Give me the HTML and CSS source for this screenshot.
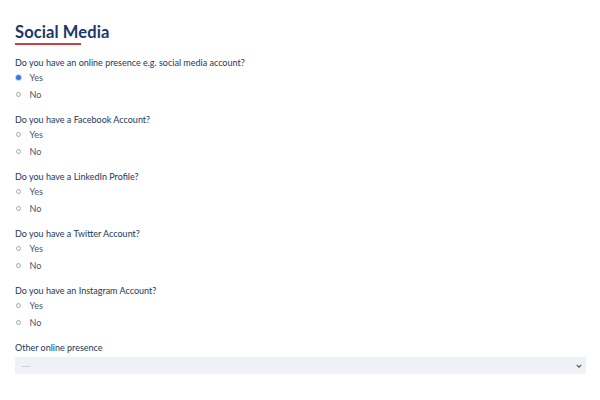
FILE: index.html
```html
<!DOCTYPE html>
<html>
<head>
<meta charset="utf-8">
<link rel="stylesheet" href="styles.css">
</head>
<body>
<div class="page">
  <h1 class="title">Social Media</h1>
  <div class="group">
    <div class="q">Do you have an online presence e.g. social media account?</div>
    <label class="opt"><span class="radio checked"></span>Yes</label>
    <label class="opt"><span class="radio"></span>No</label>
  </div>
  <div class="group">
    <div class="q">Do you have a Facebook Account?</div>
    <label class="opt"><span class="radio"></span>Yes</label>
    <label class="opt"><span class="radio"></span>No</label>
  </div>
  <div class="group">
    <div class="q">Do you have a LinkedIn Profile?</div>
    <label class="opt"><span class="radio"></span>Yes</label>
    <label class="opt"><span class="radio"></span>No</label>
  </div>
  <div class="group">
    <div class="q">Do you have a Twitter Account?</div>
    <label class="opt"><span class="radio"></span>Yes</label>
    <label class="opt"><span class="radio"></span>No</label>
  </div>
  <div class="group">
    <div class="q">Do you have an Instagram Account?</div>
    <label class="opt"><span class="radio"></span>Yes</label>
    <label class="opt"><span class="radio"></span>No</label>
  </div>
  <div class="other">
    <div class="q">Other online presence</div>
    <div class="select">
      <span class="placeholder">---</span>
      <svg class="chev" width="6" height="4" viewBox="0 0 6 4"><path d="M0.7 0.8 L3 3.1 L5.3 0.8" fill="none" stroke="#555" stroke-width="1.1"/></svg>
    </div>
  </div>
</div>
</body>
</html>
```
FILE: styles.css
```css
html, body { margin: 0; padding: 0; background: #fff; }
body { font-family: Lato, "Open Sans", sans-serif; color: #23395d; }
.page { padding: 23px 14px 0 15px; display: flex; flex-direction: column; }
.title {
  margin: 0; font-size: 16.5px; font-weight: 700; color: #1c3769;
  line-height: 18px; align-self: flex-start; position: relative;
  padding-bottom: 4px; letter-spacing: 0.1px;
}
.title::after {
  content: ""; position: absolute; left: 0; bottom: 0; width: 66px; height: 2px; background: #c9404a;
}
.group { display: flex; flex-direction: column; margin-top: 12px; }
.group + .group { margin-top: 11px; }
.q { font-size: 9px; line-height: 12px; height: 12px; color: #22375a; }
.opt { display: flex; align-items: center; font-size: 9px; line-height: 17px; height: 17px; color: #46546b; }
.radio { width: 5.5px; height: 5.5px; border: 0.8px solid #a8a8a8; border-radius: 50%; margin: 0 8.5px 0 0; box-sizing: border-box; flex: none; margin-left: 0.5px; }
.radio.checked { border: none; background: #3e73d6; box-shadow: 0 0 0 1px #c7d6f3; }
.other { margin-top: 11px; display: flex; flex-direction: column; }
.select {
  margin-top: 3px; height: 17px; background: #eef1f5; display: flex; align-items: center;
  justify-content: space-between; padding: 0 4px 0 7px; border-radius: 1px;
}
.placeholder { font-size: 7px; color: #a0a8b4; }
.chev { display: block; }
```
